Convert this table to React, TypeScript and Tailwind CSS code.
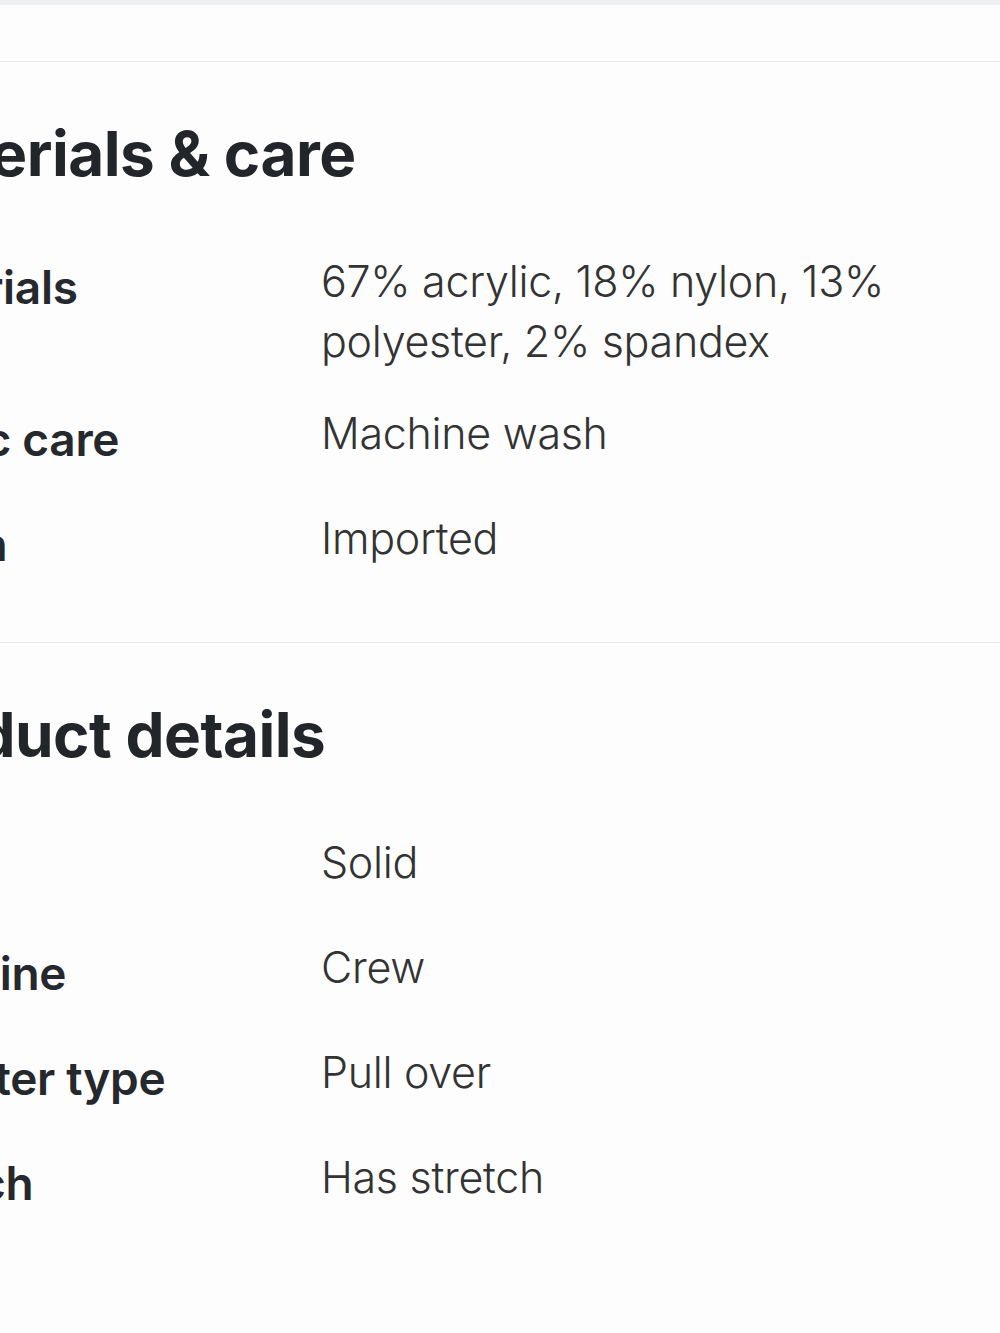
import React from 'react';

type Row = { label: string; value: string };

const materials: Row[] = [
  { label: 'Materials', value: '67% acrylic, 18% nylon, 13% polyester, 2% spandex' },
  { label: 'Fabric care', value: 'Machine wash' },
  { label: 'Origin', value: 'Imported' },
];

const details: Row[] = [
  { label: 'Style', value: 'Solid' },
  { label: 'Neckline', value: 'Crew' },
  { label: 'Sweater type', value: 'Pull over' },
  { label: 'Stretch', value: 'Has stretch' },
];

const Section: React.FC<{ title: string; rows: Row[] }> = ({ title, rows }) => (
  <section className="border-t border-[#e9e9e9] pt-[59px] pb-[46px]">
    <h2 className="-ml-[124px] text-[62px] leading-[66px] font-bold tracking-[-0.5px] text-[#222529] mb-[47px] whitespace-nowrap">
      {title}
    </h2>
    <dl>
      {rows.map(row => (
        <div key={row.label} className="grid grid-cols-[447px_620px] -ml-[126px] pt-[16px] pb-[15px] items-start">
          <dt className="text-[46px] leading-[74px] font-semibold tracking-[-0.3px] text-[#25282c] whitespace-nowrap">{row.label}</dt>
          <dd className="text-[43px] leading-[60px] font-light tracking-[-0.3px] text-[#333333] pt-[1px]">{row.value}</dd>
        </div>
      ))}
    </dl>
  </section>
);

export default function App() {
  return (
    <div className="w-[1000px] min-h-[1333px] bg-[#fdfdfd] overflow-hidden font-['Inter','Liberation_Sans',sans-serif]">
      <div className="h-[5px] bg-[#edf0f1]" />
      <div className="h-[56px]" />
      <Section title="Materials & care" rows={materials} />
      <Section title="Product details" rows={details} />
    </div>
  );
}
